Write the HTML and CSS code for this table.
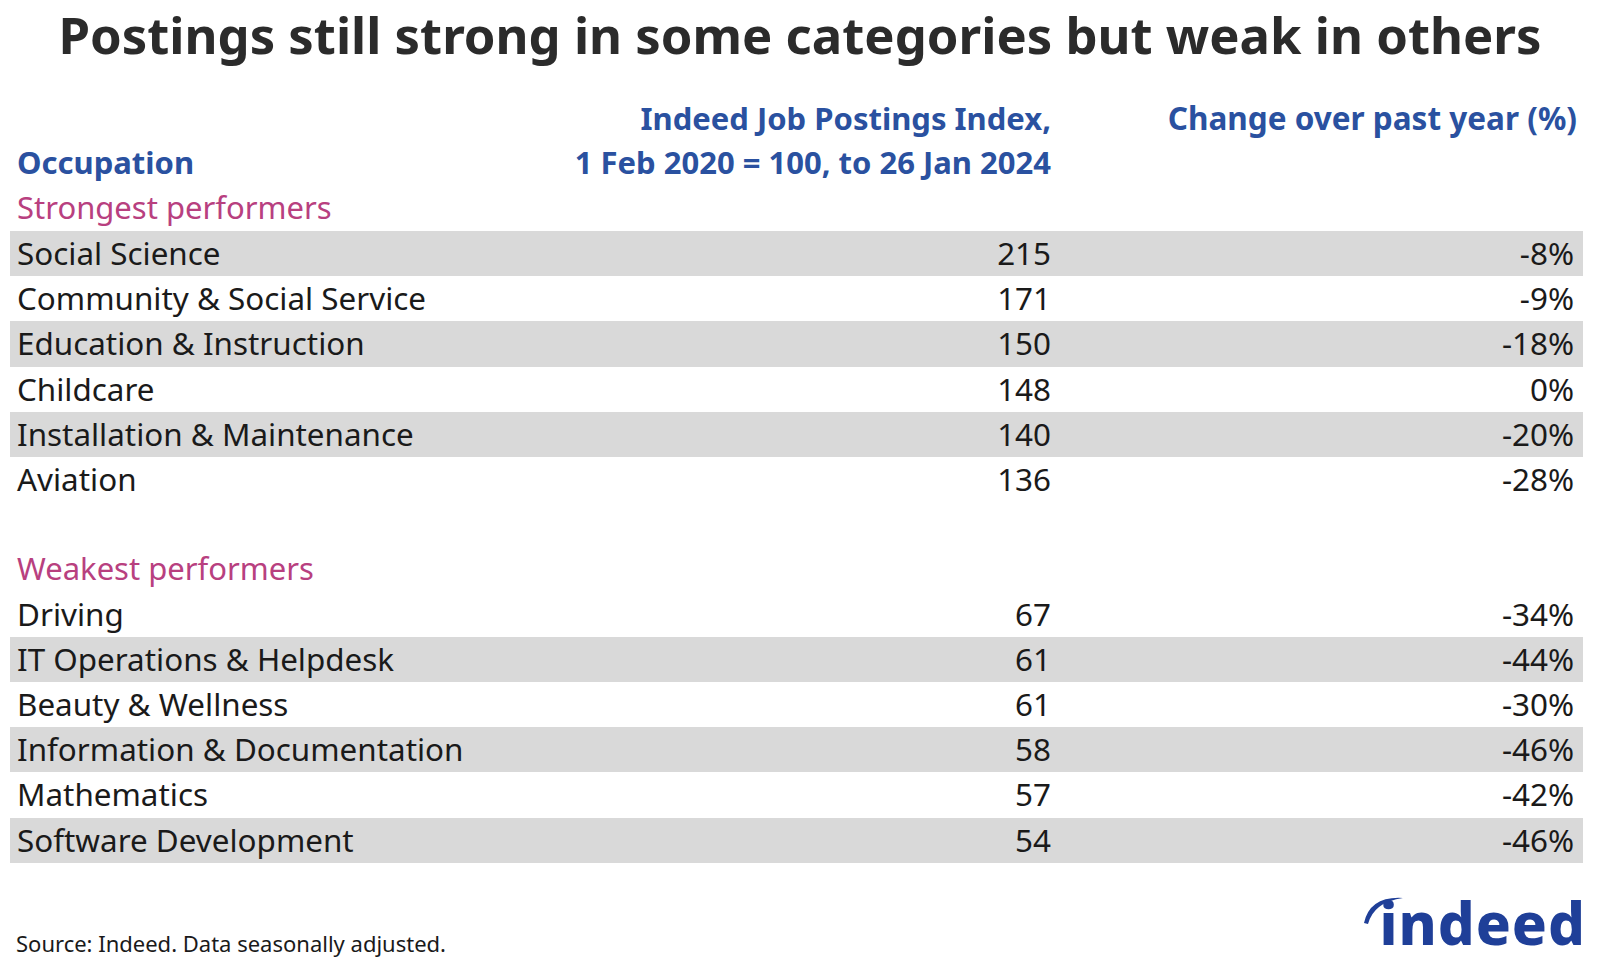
FILE: index.html
```html
<!DOCTYPE html>
<html>
<head>
<meta charset="utf-8">
<link rel="stylesheet" href="styles.css">
</head>
<body>
<div class="page">
  <h1 class="title">Postings still strong in some categories but weak in others</h1>
  <div class="table">
    <div class="row head">
      <div class="c-name"></div>
      <div class="c-idx">Indeed Job Postings Index,</div>
      <div class="c-chg">Change over past year (%)</div>
    </div>
    <div class="row head">
      <div class="c-name">Occupation</div>
      <div class="c-idx">1 Feb 2020 = 100, to 26 Jan 2024</div>
      <div class="c-chg"></div>
    </div>
    <div class="row section"><div class="c-name">Strongest performers</div></div>
    <div class="row alt"><div class="c-name">Social Science</div><div class="c-idx">215</div><div class="c-chg">-8%</div></div>
    <div class="row"><div class="c-name">Community &amp; Social Service</div><div class="c-idx">171</div><div class="c-chg">-9%</div></div>
    <div class="row alt"><div class="c-name">Education &amp; Instruction</div><div class="c-idx">150</div><div class="c-chg">-18%</div></div>
    <div class="row"><div class="c-name">Childcare</div><div class="c-idx">148</div><div class="c-chg">0%</div></div>
    <div class="row alt"><div class="c-name">Installation &amp; Maintenance</div><div class="c-idx">140</div><div class="c-chg">-20%</div></div>
    <div class="row"><div class="c-name">Aviation</div><div class="c-idx">136</div><div class="c-chg">-28%</div></div>
    <div class="row blank"></div>
    <div class="row section"><div class="c-name">Weakest performers</div></div>
    <div class="row"><div class="c-name">Driving</div><div class="c-idx">67</div><div class="c-chg">-34%</div></div>
    <div class="row alt"><div class="c-name">IT Operations &amp; Helpdesk</div><div class="c-idx">61</div><div class="c-chg">-44%</div></div>
    <div class="row"><div class="c-name">Beauty &amp; Wellness</div><div class="c-idx">61</div><div class="c-chg">-30%</div></div>
    <div class="row alt"><div class="c-name">Information &amp; Documentation</div><div class="c-idx">58</div><div class="c-chg">-46%</div></div>
    <div class="row"><div class="c-name">Mathematics</div><div class="c-idx">57</div><div class="c-chg">-42%</div></div>
    <div class="row alt"><div class="c-name">Software Development</div><div class="c-idx">54</div><div class="c-chg">-46%</div></div>
  </div>
  <div class="footer">
    <div class="source">Source: Indeed. Data seasonally adjusted.</div>
    <div class="logo">
      <svg class="arc" width="48" height="36" viewBox="0 0 48 36">
        <path d="M3 31 Q 9 4, 42 6 Q 13 10, 7 32 Z" fill="#1f3f98"/>
      </svg>
      <span class="logo-text">indeed</span>
    </div>
  </div>
</div>
</body>
</html>
```
FILE: styles.css
```css
html, body {
  margin: 0;
  padding: 0;
  background: #ffffff;
}
.page {
  width: 1600px;
  height: 970px;
  font-family: "Noto Sans", "Open Sans", sans-serif;
  color: #1a1a1a;
  display: flex;
  flex-direction: column;
}
.title {
  margin: 0;
  height: 96px;
  padding-top: 0;
  box-sizing: border-box;
  text-align: center;
  font-size: 50.8px;
  line-height: 70px;
  font-weight: 700;
  color: #2b2b2b;
  white-space: nowrap;
}
.table {
  margin-left: 10px;
  width: 1573px;
}
.row {
  display: grid;
  grid-template-columns: 1fr 520px 524px;
  box-sizing: border-box;
  height: 45.1px;
  align-items: center;
  padding: 0 8px 4px 7px;
  font-size: 31.4px;
  white-space: nowrap;
}
.row.alt {
  background: #d9d9d9;
}
.c-idx, .c-chg {
  text-align: right;
}
.c-chg {
  padding-right: 1px;
}
.head {
  color: #2a51a0;
  font-weight: 700;
  font-size: 31px;
}
.head .c-chg {
  padding-right: 0;
  margin-right: -2px;
  font-size: 31.5px;
}
.section {
  color: #b8407f;
  font-size: 31px;
}
.footer {
  flex: 1;
  display: flex;
  justify-content: space-between;
  align-items: flex-end;
  padding: 0 14px 20px 16px;
}
.source {
  font-size: 22px;
  color: #1a1a1a;
  line-height: 30px;
  margin-bottom: -8px;
}
.logo {
  position: relative;
  padding-left: 18px;
}
.arc {
  position: absolute;
  left: 0;
  top: -4px;
}
.logo-text {
  font-family: "Noto Sans", sans-serif;
  font-weight: 800;
  font-size: 58px;
  line-height: 54px;
  letter-spacing: 1px;
  color: #1f3f98;
}
```
